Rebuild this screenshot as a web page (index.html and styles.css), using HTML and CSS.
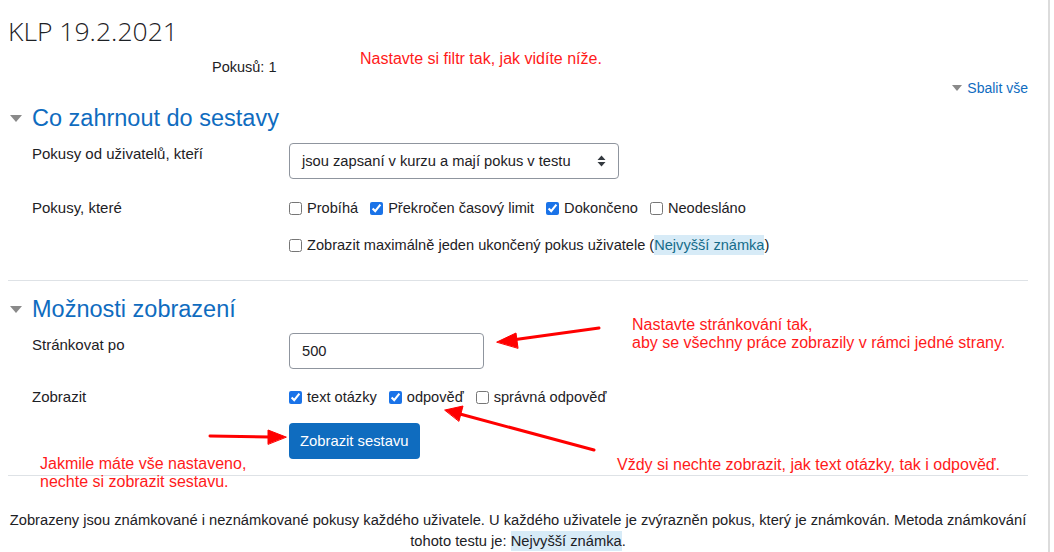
FILE: index.html
```html
<!DOCTYPE html>
<html lang="cs">
<head>
<meta charset="utf-8">
<title>KLP 19.2.2021</title>
<link rel="stylesheet" href="styles.css">
</head>
<body>
<div class="page">
  <h2 class="title">KLP 19.2.2021</h2>
  <div class="attempts">Pokusů: 1</div>
  <div class="collapse-all"><span class="tri tri-small"></span><a href="#">Sbalit vše</a></div>

  <section class="fs">
    <h3 class="legend"><span class="tri"></span>Co zahrnout do sestavy</h3>
    <div class="frow frow-select">
      <div class="flabel">Pokusy od uživatelů, kteří</div>
      <div class="fcontent">
        <div class="select">
          <span>jsou zapsaní v kurzu a mají pokus v testu</span>
          <svg class="sel-arrows" width="9" height="12" viewBox="0 0 9 12"><path d="M4.5 0.5L8.5 5H0.5Z M4.5 11.5L8.5 7H0.5Z" fill="#343a40"/></svg>
        </div>
      </div>
    </div>
    <div class="frow frow-checks">
      <div class="flabel">Pokusy, které</div>
      <div class="fcontent">
        <div class="checks">
          <label class="chk"><input type="checkbox">Probíhá</label>
          <label class="chk"><input type="checkbox" checked>Překročen časový limit</label>
          <label class="chk"><input type="checkbox" checked>Dokončeno</label>
          <label class="chk"><input type="checkbox">Neodesláno</label>
        </div>
      </div>
    </div>
    <div class="frow frow-single">
      <div class="flabel"></div>
      <div class="fcontent">
        <label class="chk"><input type="checkbox"><span>Zobrazit maximálně jeden ukončený pokus uživatele (<span class="hl hl-teal">Nejvyšší známka</span>)</span></label>
      </div>
    </div>
  </section>

  <section class="fs fs2">
    <h3 class="legend"><span class="tri"></span>Možnosti zobrazení</h3>
    <div class="frow frow-input">
      <div class="flabel">Stránkovat po</div>
      <div class="fcontent">
        <input class="text-input" type="text" value="500">
      </div>
    </div>
    <div class="frow frow-show">
      <div class="flabel">Zobrazit</div>
      <div class="fcontent">
        <div class="checks">
          <label class="chk"><input type="checkbox" checked>text otázky</label>
          <label class="chk"><input type="checkbox" checked>odpověď</label>
          <label class="chk"><input type="checkbox">správná odpověď</label>
        </div>
      </div>
    </div>
    <div class="frow frow-btn">
      <div class="flabel"></div>
      <div class="fcontent">
        <button class="btn" type="button">Zobrazit sestavu</button>
      </div>
    </div>
  </section>

  <p class="note">Zobrazeny jsou známkované i neznámkované pokusy každého uživatele. U každého uživatele je zvýrazněn pokus, který je známkován. Metoda známkování tohoto testu je: <span class="hl">Nejvyšší známka</span>.</p>

  <div class="ann ann-top">Nastavte si filtr tak, jak vidíte níže.</div>
  <div class="ann ann-paging">Nastavte stránkování tak,<br>aby se všechny práce zobrazily v rámci jedné strany.</div>
  <div class="ann ann-show">Vždy si nechte zobrazit, jak text otázky, tak i odpověď.</div>
  <div class="ann ann-btn">Jakmile máte vše nastaveno,<br>nechte si zobrazit sestavu.</div>

  <svg class="arrows" width="1054" height="552" viewBox="0 0 1054 552">
    <g stroke="#ff0000" stroke-width="3" fill="#ff0000" stroke-linecap="round">
      <line x1="599" y1="328" x2="512" y2="340"/>
      <path d="M497 342 L516 333 L518 348 Z" stroke-width="1"/>
      <line x1="210" y1="436" x2="270" y2="437"/>
      <path d="M286 437 L268 430 L268 444 Z" stroke-width="1"/>
      <line x1="594" y1="450" x2="460" y2="414"/>
      <path d="M445 410 L463 406 L459 421 Z" stroke-width="1"/>
    </g>
  </svg>
</div>
</body>
</html>
```
FILE: styles.css
```css
* { box-sizing: border-box; }

html, body {
  margin: 0;
  padding: 0;
  background: #fff;
}

body {
  font-family: "Liberation Sans", Arial, sans-serif;
  font-size: 15px;
  color: #1d2125;
}

.page {
  position: relative;
  width: 1050px;
  height: 552px;
  border-right: 2px solid #dcdcdc;
  padding: 0 20px 0 8px;
  overflow: hidden;
}

.title {
  margin: 0;
  padding-top: 12px;
  font-family: "Open Sans", "Liberation Sans", sans-serif;
  font-weight: 300;
  font-size: 26.5px;
  line-height: 38px;
  color: #1d2125;
}

.attempts {
  margin: 7px 0 0 204px;
  font-size: 14.5px;
  line-height: 20px;
}

.collapse-all {
  display: flex;
  justify-content: flex-end;
  align-items: center;
  margin-top: 1px;
  line-height: 20px;
}

.collapse-all a {
  color: #0f6cbf;
  text-decoration: none;
  font-size: 14px;
}

.tri {
  display: inline-block;
  width: 0;
  height: 0;
  border-left: 6px solid transparent;
  border-right: 6px solid transparent;
  border-top: 7px solid #8a8a8a;
  margin-right: 10px;
  vertical-align: middle;
}

.tri-small {
  border-left-width: 5px;
  border-right-width: 5px;
  border-top-width: 6px;
  margin-right: 5px;
}

.fs {
  border-bottom: 1px solid #dee2e6;
}

.legend {
  display: flex;
  align-items: center;
  margin: 0;
  padding-left: 2px;
  font-weight: 400;
  font-size: 23.5px;
  line-height: 30px;
  color: #0f6cbf;
}

.fs > .legend { margin-top: 5px; }

.frow {
  display: flex;
}

.flabel {
  width: 281px;
  padding-left: 24px;
  line-height: 20px;
}

.fcontent {
  flex: 1;
}

.frow-select { margin-top: 10px; }
.frow-select .flabel { padding-top: 1px; }

.select {
  display: flex;
  align-items: center;
  justify-content: space-between;
  width: 330px;
  height: 36px;
  padding: 0 12px 0 12px;
  border: 1px solid #8f959e;
  border-radius: 4px;
  font-size: 14.7px;
  color: #1d2125;
}

.frow-checks { margin-top: 19px; }
.frow-single { margin-top: 17px; padding-bottom: 25px; }

.checks {
  display: flex;
  gap: 12px;
}

.chk {
  display: inline-flex;
  align-items: center;
  line-height: 20px;
  font-size: 14.6px;
  white-space: nowrap;
}

.chk input {
  width: 13px;
  height: 13px;
  margin: 0 5px 0 0;
  accent-color: #1a73e8;
}

.hl {
  background: #d7ebf7;
  box-shadow: 0 2px 0 #d7ebf7, 0 -2px 0 #d7ebf7;
}

.hl-teal {
  color: #156b8a;
}

.fs2 .legend { margin-top: 13px; }

.frow-input { margin-top: 9px; }
.frow-input .flabel { padding-top: 2px; }

.text-input {
  width: 195px;
  height: 36px;
  padding: 0 12px;
  border: 1px solid #8f959e;
  border-radius: 4px;
  font-family: inherit;
  font-size: 14.7px;
  color: #1d2125;
}

.frow-show { margin-top: 18px; }

.frow-btn { margin-top: 16px; padding-bottom: 16px; }

.btn {
  height: 36px;
  padding: 0 11px;
  border: 0;
  border-radius: 4px;
  background: #0f6cbf;
  color: #fff;
  font-family: inherit;
  font-size: 14.8px;
}

.note {
  margin: 34px 0 0;
  text-align: center;
  font-size: 14.7px;
  line-height: 21px;
}

.ann {
  position: absolute;
  font-family: "Liberation Sans", Arial, sans-serif;
  font-size: 16px;
  line-height: 18px;
  color: #ff1a1a;
  white-space: nowrap;
}

.ann-top { left: 360px; top: 50px; }
.ann-paging { left: 632px; top: 316px; }
.ann-show { left: 617px; top: 456px; }
.ann-btn { left: 40px; top: 455px; }

.arrows {
  position: absolute;
  left: 0;
  top: 0;
  pointer-events: none;
}

.sel-arrows { flex: none; }
```
